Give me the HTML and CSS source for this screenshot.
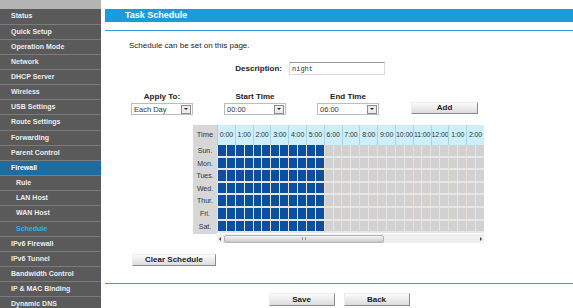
FILE: index.html
```html
<!DOCTYPE html>
<html lang="en">
<head>
<meta charset="utf-8">
<title>Task Schedule</title>
<link rel="stylesheet" href="styles.css">
</head>
<body>
<div class="page">
  <nav class="sidebar">
    <div class="side-top"></div>
    <ul class="menu">
      <li class="menu-item">Status</li>
      <li class="menu-item">Quick Setup</li>
      <li class="menu-item">Operation Mode</li>
      <li class="menu-item">Network</li>
      <li class="menu-item">DHCP Server</li>
      <li class="menu-item">Wireless</li>
      <li class="menu-item">USB Settings</li>
      <li class="menu-item">Route Settings</li>
      <li class="menu-item">Forwarding</li>
      <li class="menu-item">Parent Control</li>
      <li class="menu-item active">Firewall</li>
      <li class="menu-item sub">Rule</li>
      <li class="menu-item sub">LAN Host</li>
      <li class="menu-item sub">WAN Host</li>
      <li class="menu-item sub current">Schedule</li>
      <li class="menu-item">IPv6 Firewall</li>
      <li class="menu-item">IPv6 Tunnel</li>
      <li class="menu-item">Bandwidth Control</li>
      <li class="menu-item">IP &amp; MAC Binding</li>
      <li class="menu-item">Dynamic DNS</li>
    </ul>
  </nav>
  <main class="main">
    <div class="title-bar">Task Schedule</div>
    <div class="divider"></div>
    <div class="content">
      <p class="intro">Schedule can be set on this page.</p>
      <div class="desc-row">
        <label class="desc-label" for="desc">Description:</label>
        <input class="desc-input" id="desc" type="text" value="night">
      </div>
      <div class="select-row">
        <div class="field">
          <div class="field-label">Apply To:</div>
          <div class="select"><span>Each Day</span><span class="arrow"></span></div>
        </div>
        <div class="field">
          <div class="field-label">Start Time</div>
          <div class="select"><span>00:00</span><span class="arrow"></span></div>
        </div>
        <div class="field">
          <div class="field-label">End Time</div>
          <div class="select"><span>06:00</span><span class="arrow"></span></div>
        </div>
        <button class="btn btn-add" type="button">Add</button>
      </div>
      <div class="schedule">
        <div class="day-col">
          <div class="day-head">Time</div>
          <div class="day">Sun.</div>
          <div class="day">Mon.</div>
          <div class="day">Tues.</div>
          <div class="day">Wed.</div>
          <div class="day">Thur.</div>
          <div class="day">Fri.</div>
          <div class="day">Sat.</div>
        </div>
        <div class="hours-area">
          <div class="hours-view">
            <div class="hour-head">
              <div class="hh">0:00</div><div class="hh">1:00</div><div class="hh">2:00</div><div class="hh">3:00</div>
              <div class="hh">4:00</div><div class="hh">5:00</div><div class="hh">6:00</div><div class="hh">7:00</div>
              <div class="hh">8:00</div><div class="hh">9:00</div><div class="hh">10:00</div><div class="hh">11:00</div>
              <div class="hh">12:00</div><div class="hh">1:00</div><div class="hh">2:00</div><div class="hh">3:00</div>
              <div class="hh">4:00</div><div class="hh">5:00</div><div class="hh">6:00</div><div class="hh">7:00</div>
              <div class="hh">8:00</div><div class="hh">9:00</div><div class="hh">10:00</div><div class="hh">11:00</div>
            </div>
            <div class="cells" id="cells"></div>
          </div>
          <div class="scrollbar">
            <span class="sb-arrow sb-left"></span>
            <span class="sb-thumb"><span class="grip"></span></span>
            <span class="sb-track"></span>
            <span class="sb-arrow sb-right"></span>
          </div>
        </div>
      </div>
      <button class="btn btn-clear" type="button">Clear Schedule</button>
    </div>
    <div class="divider bottom"></div>
    <div class="actions">
      <button class="btn btn-action" type="button">Save</button>
      <button class="btn btn-action" type="button">Back</button>
    </div>
  </main>
</div>
<script src="script.js"></script>
</body>
</html>
```

FILE: styles.css
```css
* { box-sizing: border-box; }
html, body { margin: 0; padding: 0; background: #fff; }
body {
  font-family: "Liberation Sans", Arial, sans-serif;
  color: #333;
  width: 573px;
  height: 308px;
  overflow: hidden;
}
.page { display: flex; height: 308px; }

/* Sidebar */
.sidebar { width: 101px; flex: none; background: #5a5a5a; overflow: hidden; }
.side-top { height: 9.4px; background: #b4b4b4; }
.menu { list-style: none; margin: 0; padding: 0; }
.menu-item {
  height: 15.16px;
  line-height: 14.16px;
  border-bottom: 1px solid #7c7c7c;
  padding-left: 11px;
  font-size: 7px;
  font-weight: bold;
  color: #ececec;
  white-space: nowrap;
}
.menu-item.sub { padding-left: 16px; }
.menu-item.active { background: #1f6c9e; color: #fff; }
.menu-item.current { color: #2ab4ea; }

/* Main */
.main { flex: 1; padding-left: 4px; display: flex; flex-direction: column; }
.title-bar {
  margin-top: 9px;
  height: 13px;
  background: #1c9bd8;
  color: #fff;
  font-size: 9px;
  font-weight: bold;
  line-height: 13px;
  padding-left: 20px;
}
.divider { margin-top: 8px; height: 1px; background: #27a2dc; }
.divider.bottom { margin-top: 17px; }
.content { padding-left: 24px; display: flex; flex-direction: column; align-items: flex-start; }
.intro { margin: 10px 0 0; font-size: 8px; line-height: 10px; color: #222; }

.desc-row { display: flex; align-items: center; margin-top: 11px; height: 13px; }
.desc-label { width: 153px; text-align: right; font-size: 8px; font-weight: bold; color: #222; }
.desc-input {
  margin: 0 0 0 7px;
  width: 96px;
  height: 13px;
  border: 1px solid #dadada;
  border-top-color: #9a9a9a;
  font-family: "Liberation Mono", monospace;
  font-size: 7px;
  padding: 0 2px;
  color: #333;
  background: #fff;
}

.select-row { display: flex; align-items: flex-end; gap: 31px; margin-top: 17px; margin-left: 2px; }
.field { width: 62px; display: flex; flex-direction: column; align-items: center; }
.field-label { font-size: 8px; font-weight: bold; line-height: 10px; margin-bottom: 1px; color: #222; }
.select {
  width: 62px;
  height: 12px;
  border: 1px solid #bdbdbd;
  display: flex;
  align-items: center;
  justify-content: space-between;
  padding: 0 1px 0 2px;
  font-size: 7.5px;
  color: #333;
}
.arrow {
  width: 10px;
  height: 9px;
  border: 1px solid #8c8c8c;
  background: #ececec;
  display: flex;
  align-items: center;
  justify-content: center;
}
.arrow::after {
  content: "";
  border-left: 2px solid transparent;
  border-right: 2px solid transparent;
  border-top: 2px solid #222;
}

.btn {
  font-family: "Liberation Sans", Arial, sans-serif;
  font-size: 8px;
  font-weight: bold;
  color: #222;
  background: linear-gradient(#fbfbfb, #dcdcdc);
  border: 1px solid;
  border-color: #ededed #8a8a8a #8a8a8a #ededed;
  padding: 0;
  line-height: 10px;
}
.btn-add { width: 67px; height: 12px; margin-left: 1px; margin-bottom: 1px; }
.btn-clear { width: 84px; height: 12px; margin-top: 11px; margin-left: 3px; }
.actions { display: flex; justify-content: center; gap: 9px; margin-top: 9px; }
.btn-action { width: 66px; height: 13px; }

/* Schedule grid */
.schedule { display: flex; margin-top: 10px; margin-left: 64px; }
.day-col { width: 24px; background: #d7d7d7; display: flex; flex-direction: column; height: 109px; }
.day-head { height: 20px; line-height: 20px; text-align: center; font-size: 7.5px; color: #333; }
.day { height: 12.6px; line-height: 12.6px; text-align: center; font-size: 7px; color: #333; }
.hours-area { width: 267px; }
.hours-view { overflow: hidden; width: 267px; }
.hour-head { display: grid; grid-template-columns: repeat(24, 17.8px); height: 20px; width: 427.2px; }
.hh {
  background: #cdeefb;
  border-left: 1px solid #a9d2e4;
  font-size: 7px;
  text-align: center;
  line-height: 20px;
  white-space: nowrap;
  letter-spacing: -0.1px;
  color: #333;
}
.cells {
  display: grid;
  grid-template-columns: repeat(48, 8.9px);
  grid-auto-rows: 12.6px;
  width: 427.2px;
  border-left: 1px solid #e6e6e6;
}
.cell {
  background: #d1d1d1;
  border-right: 1px solid #e6e6e6;
  border-bottom: 2px solid #e6e6e6;
}
.cell.hour-end { border-right-color: #e9dfd0; }
.cell.on { background: #0b4f9f; }

.scrollbar { display: flex; align-items: center; height: 9px; margin-top: 1px; background: #efefef; }
.sb-arrow { width: 6px; height: 9px; display: flex; align-items: center; justify-content: center; flex: none; }
.sb-left::after {
  content: "";
  border-top: 2px solid transparent;
  border-bottom: 2px solid transparent;
  border-right: 2px solid #444;
}
.sb-right::after {
  content: "";
  border-top: 2px solid transparent;
  border-bottom: 2px solid transparent;
  border-left: 2px solid #444;
}
.sb-thumb {
  width: 160px;
  height: 8px;
  margin-left: 1px;
  background: linear-gradient(#f4f4f4, #cacaca);
  border: 1px solid #b3b3b3;
  border-radius: 2px;
  display: flex;
  align-items: center;
  justify-content: center;
  flex: none;
}
.grip { width: 4px; height: 3px; border-left: 1px solid #999; border-right: 1px solid #999; }
.sb-track { flex: 1; }
```

FILE: script.js
```js
(function () {
  var grid = document.getElementById('cells');
  for (var r = 0; r < 7; r++) {
    for (var c = 0; c < 48; c++) {
      var d = document.createElement('div');
      var cls = 'cell';
      if (c < 12) cls += ' on';
      if (c % 2 === 1) cls += ' hour-end';
      d.className = cls;
      grid.appendChild(d);
    }
  }
})();
```
